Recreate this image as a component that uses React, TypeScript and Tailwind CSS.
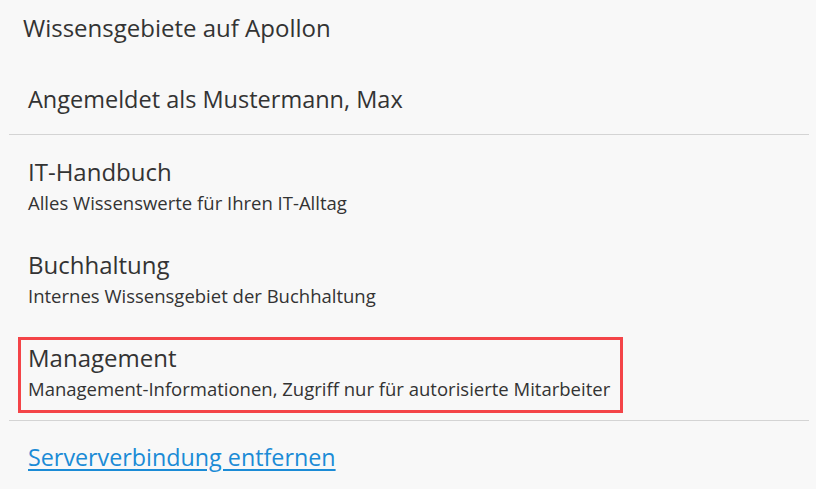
const areas = [
  { name: "IT-Handbuch", desc: "Alles Wissenswerte für Ihren IT-Alltag", selected: false },
  { name: "Buchhaltung", desc: "Internes Wissensgebiet der Buchhaltung", selected: false },
  {
    name: "Management",
    desc: "Management-Informationen, Zugriff nur für autorisierte Mitarbeiter",
    selected: true,
  },
];

const App = () => {
  return (
    <div className="w-[816px] h-[489px] overflow-hidden bg-[#f8f8f8] text-[#333333] font-['Open_Sans',sans-serif] pt-[13px]">
      <h1 className="pl-[23px] text-[24px] leading-[30px]">Wissensgebiete auf Apollon</h1>
      <div className="mt-[41px] pl-[28px] text-[23.5px] leading-[30px]">Angemeldet als Mustermann, Max</div>
      <div className="mt-[20px] ml-[9px] mr-[7px] h-px bg-[#d4d4d4]"></div>
      <div className="mt-[16px] flex flex-col gap-[17px]">
        {areas.map((a) => (
          <div
            key={a.name}
            className={
              a.selected
                ? "ml-[18px] w-fit border-[3px] border-[#f44448] pl-[7px] pr-[10px] pt-[2px] pb-[6px]"
                : "ml-[18px] w-fit border-[3px] border-transparent pl-[7px] pr-[10px] pt-[2px] pb-[6px]"
            }
          >
            <div className="text-[24px] leading-[32px]">{a.name}</div>
            <div className="text-[18.5px] leading-[30px]">{a.desc}</div>
          </div>
        ))}
      </div>
      <div className="mt-[7px] ml-[9px] mr-[7px] h-px bg-[#d4d4d4]"></div>
      <div className="mt-[21px] pl-[28px] text-[23.3px] leading-[30px]">
        <a href="#" className="text-[#1b8bd6] underline underline-offset-[3px]">
          Serververbindung entfernen
        </a>
      </div>
    </div>
  );
};

export default App;
